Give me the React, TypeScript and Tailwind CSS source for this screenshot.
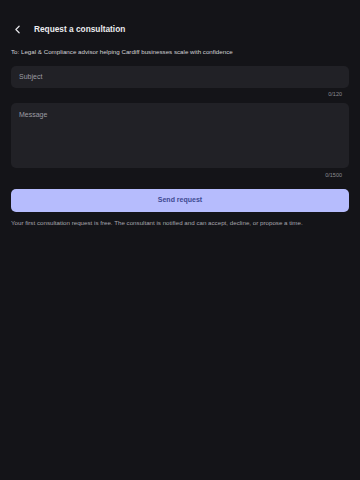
import { ChevronLeft } from "lucide-react";

export default function App() {
  return (
    <div
      className="min-h-[480px] w-[360px] bg-[#141418] text-white"
      style={{ fontFamily: '"Liberation Sans", Arial, sans-serif' }}
    >
      <div className="flex h-[56px] items-center px-[9px] pt-[2px]">
        <button className="flex h-[16px] w-[16px] items-center justify-center text-[#e6e6ea]">
          <ChevronLeft size={13} strokeWidth={2.2} />
        </button>
        <h1 className="ml-[9px] text-[8.3px] font-bold text-[#ececef]">
          Request a consultation
        </h1>
      </div>

      <div className="px-[11px]">
        <p className="-mt-[9px] text-[6.2px] leading-[9px] text-[#d2d2d6]">
          To: Legal &amp; Compliance advisor helping Cardiff businesses scale with confidence
        </p>

        <div className="mt-[10px]">
          <div className="flex h-[22px] items-center rounded-[5px] bg-[#212126] px-[8px] text-[7px] text-[#9c9ca3]">
            Subject
          </div>
          <div className="mt-[2px] pr-[7px] text-right text-[5.5px] leading-[8px] text-[#8c8c93]">0/120</div>
        </div>

        <div className="mt-[5px]">
          <div className="h-[65px] rounded-[5px] bg-[#212126] px-[8px] pt-[7px] text-[7px] text-[#9c9ca3]">
            Message
          </div>
          <div className="mt-[3px] pr-[7px] text-right text-[5.5px] leading-[8px] text-[#8c8c93]">0/1500</div>
        </div>

        <button className="mt-[10px] flex h-[23px] w-full items-center justify-center rounded-[5px] bg-[#b6bcfd] text-[7px] font-semibold text-[#3e4a92]">
          Send request
        </button>

        <p className="mt-[6px] text-[6.2px] leading-[9px] text-[#a6a6ad]">
          Your first consultation request is free. The consultant is notified and can accept, decline, or propose a time.
        </p>
      </div>
    </div>
  );
}
